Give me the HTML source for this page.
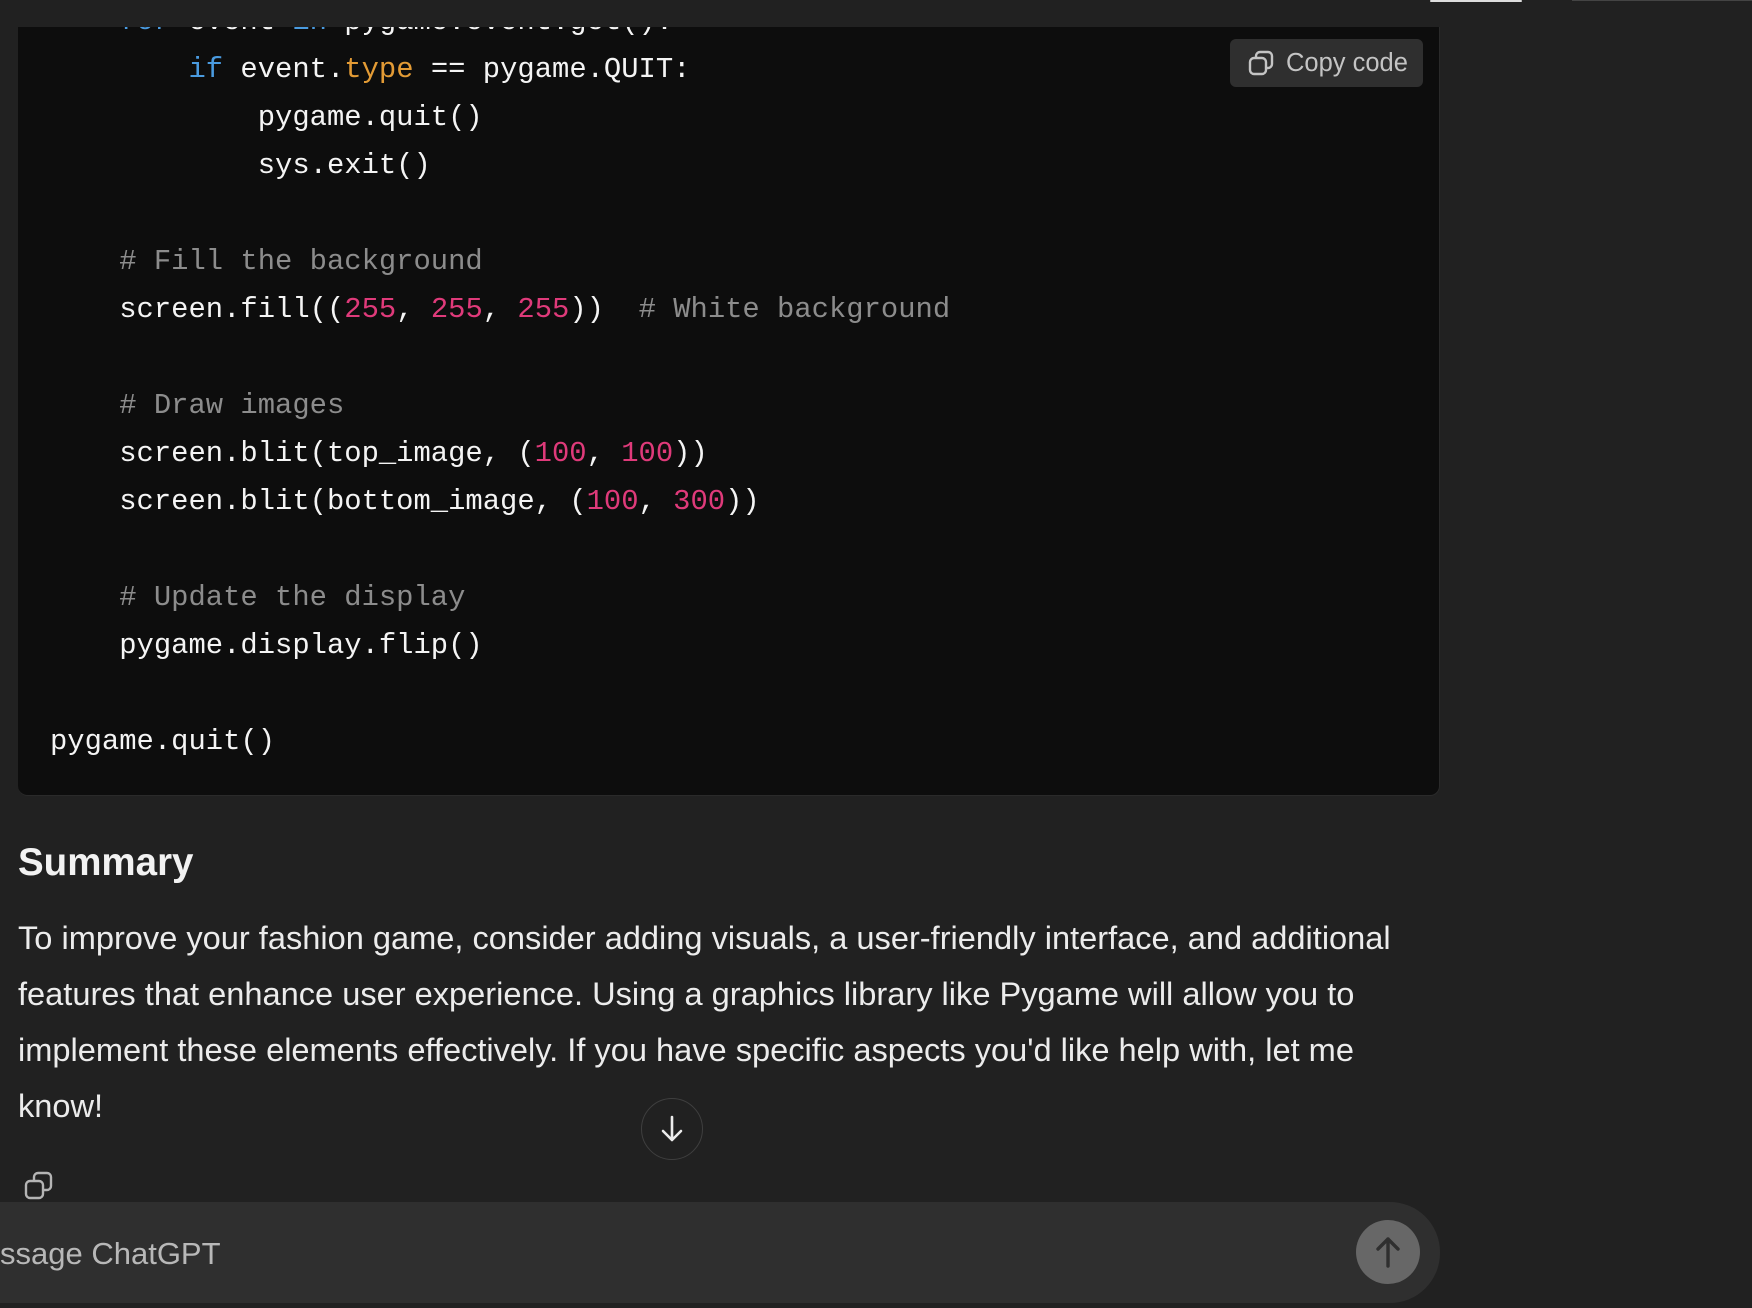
<!DOCTYPE html>
<html><head><meta charset="utf-8"><style>
*{margin:0;padding:0;box-sizing:border-box}
body{width:1752px;height:1308px;background:#212121;overflow:hidden;position:relative;font-family:"Liberation Sans",sans-serif;color:#ececec}
.code{position:absolute;left:18px;top:27px;width:1422px;height:769px;background:#0d0d0d;border-radius:0 0 10px 10px;border-right:1px solid #2a2a2a;border-bottom:1px solid #2a2a2a}
.ln{position:absolute;font-family:"Liberation Mono",monospace;font-size:28.85px;line-height:48px;height:48px;white-space:pre;color:#f4f4f4}
.k{color:#4a9be0}.o{color:#e39b35}.n{color:#df3a7a}.c{color:#8c8c8c}
.copy{position:absolute;left:1230px;top:39px;width:193px;height:48px;background:#2f2f2f;border-radius:6px;color:#c4c4c4;font-size:25.5px;line-height:48px;padding-left:56px}
</style></head><body>
<div class="code"></div>
<div class="ln" style="left:50px;top:-2px;clip-path:inset(29px 0 0 0)"><span class="k">    for</span> event <span class="k">in</span> pygame.event.get():</div>
<div class="ln" style="left:50px;top:46px">        <span class="k">if</span> event.<span class="o">type</span> == pygame.QUIT:</div>
<div class="ln" style="left:50px;top:94px">            pygame.quit()</div>
<div class="ln" style="left:50px;top:142px">            sys.exit()</div>
<div class="ln" style="left:50px;top:238px"><span class="c">    # Fill the background</span></div>
<div class="ln" style="left:50px;top:286px">    screen.fill((<span class="n">255</span>, <span class="n">255</span>, <span class="n">255</span>))  <span class="c"># White background</span></div>
<div class="ln" style="left:50px;top:382px"><span class="c">    # Draw images</span></div>
<div class="ln" style="left:50px;top:430px">    screen.blit(top_image, (<span class="n">100</span>, <span class="n">100</span>))</div>
<div class="ln" style="left:50px;top:478px">    screen.blit(bottom_image, (<span class="n">100</span>, <span class="n">300</span>))</div>
<div class="ln" style="left:50px;top:574px"><span class="c">    # Update the display</span></div>
<div class="ln" style="left:50px;top:622px">    pygame.display.flip()</div>
<div class="ln" style="left:50px;top:718px">pygame.quit()</div>
<div class="copy"><svg style="position:absolute;left:17px;top:10px" width="28" height="28" viewBox="0 0 28 28" fill="none" stroke="#c4c4c4" stroke-width="2.4"><rect x="9" y="3" width="16" height="16" rx="4"/><rect x="3" y="9" width="16" height="16" rx="4" fill="#2f2f2f"/></svg>Copy code</div>
<div style="position:absolute;left:1430px;top:0;width:92px;height:2px;background:#ddd;border-radius:2px"></div>
<div style="position:absolute;left:1572px;top:0;width:180px;height:1px;background:#444"></div>
<div style="position:absolute;left:18px;top:839px;font-size:38.5px;font-weight:bold;line-height:48px;color:#f2f2f2">Summary</div>
<div style="position:absolute;left:18px;top:910px;width:1410px;font-size:32.6px;line-height:56px;color:#ececec">To improve your fashion game, consider adding visuals, a user-friendly interface, and additional features that enhance user experience. Using a graphics library like Pygame will allow you to implement these elements effectively. If you have specific aspects you'd like help with, let me know!</div>
<div style="position:absolute;left:641px;top:1098px;width:62px;height:62px;border-radius:50%;border:1.5px solid #3f3f3f;background:#212121"><svg width="60" height="60" viewBox="0 0 60 60" fill="none" stroke="#ececec" stroke-width="2.6" stroke-linecap="round" stroke-linejoin="round"><path d="M30 18v23M21 32l9 9 9-9"/></svg></div>
<svg style="position:absolute;left:23px;top:1170px" width="32" height="32" viewBox="0 0 32 32" fill="none" stroke="#b4b4b4" stroke-width="2.4"><rect x="11" y="3" width="17" height="17" rx="4"/><rect x="3" y="11" width="17" height="17" rx="4" fill="#212121"/></svg>
<div style="position:absolute;left:-60px;top:1202px;width:1500px;height:101px;background:#2f2f2f;border-radius:50px"></div>
<div style="position:absolute;left:0;top:1231px;font-size:31px;line-height:46px;color:#b8b8b8">ssage ChatGPT</div>
<div style="position:absolute;left:1356px;top:1220px;width:64px;height:64px;border-radius:50%;background:#676767"><svg width="64" height="64" viewBox="0 0 64 64" fill="none" stroke="#2f2f2f" stroke-width="3.4" stroke-linecap="round" stroke-linejoin="round"><path d="M32 46V19M22 29l10-10 10 10"/></svg></div>
<div style="position:absolute;left:0;top:1303px;width:1752px;height:5px;background:#212121"></div>
</body></html>
